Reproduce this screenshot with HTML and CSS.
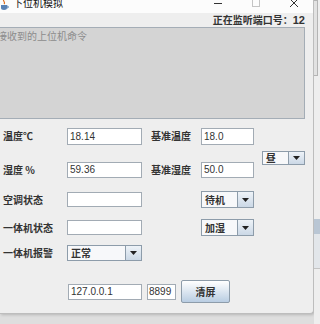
FILE: index.html
```html
<!DOCTYPE html>
<html lang="zh">
<head>
    <meta charset="UTF-8">
    <title>下位机模拟</title>
    <link rel="stylesheet" href="styles.css">
</head>
<body>

<div class="screen">
    <div class="window">
        <div class="titlebar">
            <span class="app-icon">
                <svg width="9" height="11" viewBox="0 0 9 11">
                    <path d="M4 0 C2 2 6 3 4 5" stroke="#e07020" stroke-width="1.2" fill="none"/>
                    <path d="M1 6 H7 V9 C7 10 6 11 4 11 C2 11 1 10 1 9 Z" fill="#5a82b4"/>
                    <path d="M7 7 C9 7 9 9 7 9" stroke="#5a82b4" fill="none"/>
                </svg>
            </span>
            <span class="title">下位机模拟</span>
            <span class="controls">
                <span class="ctl">
                    <svg width="10" height="9" viewBox="0 0 10 9"><path d="M1 4.5 H9" stroke="#333" stroke-width="1"/></svg>
                </span>
                <span class="ctl">
                    <svg width="10" height="9" viewBox="0 0 10 9"><rect x="1.5" y="0.5" width="7" height="7" fill="none" stroke="#c4c4c4"/></svg>
                </span>
                <span class="ctl">
                    <svg width="10" height="9" viewBox="0 0 10 9"><path d="M1 0 L9 8 M9 0 L1 8" stroke="#333" stroke-width="1"/></svg>
                </span>
            </span>
        </div>

        <div class="content">
            <div class="port">正在监听端口号：<b>12</b></div>
            <div class="log">接收到的上位机命令</div>

            <div class="form">
                <span class="label">温度℃</span>
                <div class="field wide">18.14</div>
                <span class="label label2">基准温度</span>
                <div class="field narrow">18.0</div>
                <div class="combo small day">
                    <span class="combo-text">昼</span>
                    <span class="combo-btn"><svg width="7" height="4" viewBox="0 0 7 4"><path d="M0 0 H7 L3.5 4 Z" fill="#222"/></svg></span>
                </div>

                <span class="label">湿度 %</span>
                <div class="field wide short">59.36</div>
                <span class="label label2">基准湿度</span>
                <div class="field narrow short">50.0</div>

                <span class="label">空调状态</span>
                <div class="field wide thin"></div>
                <div class="combo narrow side-combo">
                    <span class="combo-text">待机</span>
                    <span class="combo-btn"><svg width="7" height="4" viewBox="0 0 7 4"><path d="M0 0 H7 L3.5 4 Z" fill="#222"/></svg></span>
                </div>

                <span class="label">一体机状态</span>
                <div class="field wide thin"></div>
                <div class="combo narrow side-combo">
                    <span class="combo-text">加湿</span>
                    <span class="combo-btn"><svg width="7" height="4" viewBox="0 0 7 4"><path d="M0 0 H7 L3.5 4 Z" fill="#222"/></svg></span>
                </div>

                <span class="label">一体机报警</span>
                <div class="combo wide">
                    <span class="combo-text">正常</span>
                    <span class="combo-btn"><svg width="7" height="4" viewBox="0 0 7 4"><path d="M0 0 H7 L3.5 4 Z" fill="#222"/></svg></span>
                </div>
            </div>

            <div class="footer">
                <div class="field ip">127.0.0.1</div>
                <div class="field portno">8899</div>
                <button class="clear">清屏</button>
            </div>
        </div>
    </div>

    <div class="side">
        <div class="side-thumb"></div>
        <div class="side-band"></div>
        <div class="side-line"></div>
    </div>
</div>

</body>
</html>
```

FILE: styles.css
```css
body {
    margin: 0;
    background: #dedede;
    font-family: "Noto Sans CJK SC", "Liberation Sans", sans-serif;
    color: #222;
}
.screen {
    display: flex;
    width: 320px;
    height: 324px;
    overflow: hidden;
}
.window {
    width: 313px;
    height: 313px;
    flex-shrink: 0;
    background: #eeeeee;
    border-right: 1px solid #bdbdbd;
    border-bottom: 1px solid #bdbdbd;
    border-bottom-right-radius: 4px;
    box-shadow: 1px 1px 3px rgba(0, 0, 0, 0.18);
    overflow: hidden;
}
.titlebar {
    display: flex;
    align-items: flex-start;
    height: 13px;
    background: #fcfcfc;
    overflow: hidden;
}
.app-icon svg {
    display: block;
    margin-top: -1px;
}
.title {
    margin-left: 4px;
    margin-top: -4px;
    font-size: 10px;
    line-height: 14px;
    color: #111;
}
.controls {
    display: flex;
    margin-left: auto;
}
.ctl {
    display: flex;
    justify-content: center;
    width: 38px;
}
.ctl svg {
    display: block;
    margin-top: -1px;
}

.port {
    height: 14px;
    padding-right: 8px;
    text-align: right;
    font-size: 10px;
    line-height: 14px;
    font-weight: bold;
    color: #333;
}
.port b {
    font-family: "Liberation Sans", sans-serif;
    font-size: 11px;
}
.log {
    box-sizing: border-box;
    height: 92px;
    margin-left: -6px;
    margin-right: 8px;
    padding: 2px 2px;
    background: #d4d4d4;
    border: 1px solid #a4adb6;
    font-size: 10px;
    line-height: 12px;
    color: #8c8c8c;
}

.form {
    display: grid;
    grid-template-columns: 64px 75px 59px 53px 51px;
    grid-template-rows: 34px 30px 28px 25px 16px;
    align-items: start;
    margin-top: 9px;
    padding-left: 3px;
}
.label {
    grid-column: 1;
    font-size: 10px;
    line-height: 16px;
    font-weight: bold;
    color: #333;
    white-space: nowrap;
}
.label2 {
    grid-column: 3;
    padding-left: 9px;
}
.field {
    box-sizing: border-box;
    height: 17px;
    padding-left: 2px;
    background: #fff;
    border: 1px solid #a2abb4;
    font-family: "Liberation Sans", sans-serif;
    font-size: 10px;
    line-height: 15px;
    color: #333;
}
.field.short {
    height: 16px;
    line-height: 14px;
}
.field.thin {
    height: 15px;
}
.wide {
    width: 75px;
}
.narrow {
    width: 53px;
}

.combo {
    box-sizing: border-box;
    display: flex;
    height: 17px;
    background: #f7f8fa;
    border: 1px solid #8d9caa;
}
.combo.wide {
    height: 16px;
}
.combo-text {
    flex: 1;
    padding-left: 3px;
    font-size: 10px;
    line-height: 15px;
    font-weight: bold;
    color: #333;
}
.combo.wide .combo-text {
    line-height: 14px;
}
.combo-btn {
    display: flex;
    align-items: center;
    justify-content: center;
    width: 15px;
    border-left: 1px solid #8d9caa;
    background: linear-gradient(#eef3f8, #cbd8e6);
}
.combo.small {
    width: 43px;
    height: 14px;
}
.combo.small .combo-text {
    line-height: 12px;
}
.day {
    grid-row: 1 / 3;
    grid-column: 5;
    margin-top: 23px;
    margin-left: 8px;
}
.side-combo {
    grid-column: 4;
    margin-top: -1px;
}

.footer {
    display: flex;
    align-items: center;
    gap: 5px;
    margin-top: 19px;
    padding-left: 68px;
}
.ip {
    width: 74px;
    height: 16px;
    line-height: 14px;
}
.portno {
    width: 29px;
    height: 16px;
    padding-left: 1px;
    line-height: 14px;
}
.clear {
    width: 49px;
    height: 23px;
    padding: 0;
    border: 1px solid #8d9caa;
    border-radius: 2px;
    background: linear-gradient(#ffffff, #b9cde2);
    font-family: "Noto Sans CJK SC", sans-serif;
    font-size: 10px;
    font-weight: bold;
    color: #333;
}

.side {
    flex: 1;
    display: flex;
    flex-direction: column;
    background: #eeeeee;
}
.side-thumb {
    height: 74px;
    margin-right: 2px;
    background: #e2e2e2;
    border: 1px solid #b4b4b4;
    border-left: none;
}
.side-band {
    height: 15px;
    margin-top: 143px;
    background: #b9c6d4;
}
.side-line {
    height: 34px;
    background: #e2e6ea;
    border-bottom: 1px solid #c4c4c4;
}
```
